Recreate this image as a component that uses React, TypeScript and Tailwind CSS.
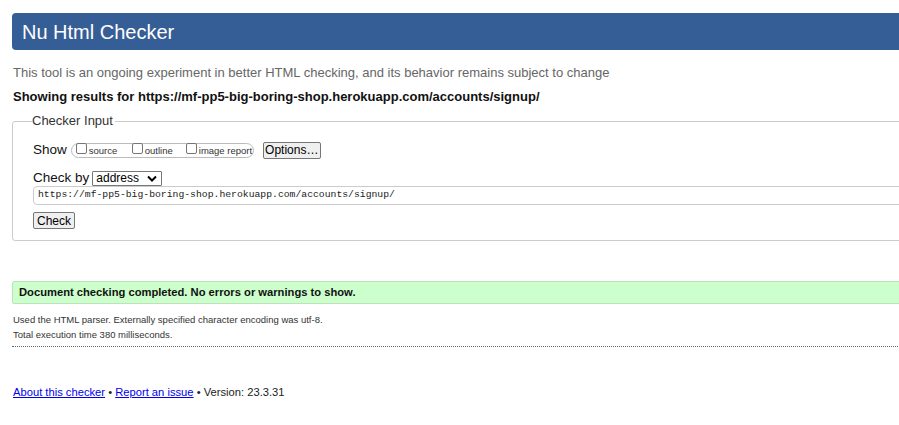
import React from "react";

const sans = { fontFamily: '"Liberation Sans", Arial, sans-serif' };

function Box({ label, w }: { label: string; w: string }) {
  return (
    <span className={`inline-flex items-center whitespace-nowrap ${w}`}>
      <span className="inline-block shrink-0 w-[11px] h-[11px] border border-[#767676] rounded-[2px] bg-white mr-[2px] -mt-[3px]" />
      <span className="text-[9.5px] text-[#333] mt-[2px]">{label}</span>
    </span>
  );
}

export default function App() {
  return (
    <div className="w-[899px] h-[425px] overflow-hidden bg-white" style={sans}>
      <div className="w-[1100px] pl-3 pt-[13px]">
        <div className="h-[37px] bg-[#365e96] rounded-[4px] flex items-center pl-[10px]">
          <h1 className="text-white text-[20px] leading-none">Nu Html Checker</h1>
        </div>
        <p className="mt-[15px] pl-px text-[13px] leading-[16px] text-[#666]">
          This tool is an ongoing experiment in better HTML checking, and its behavior remains subject to change
        </p>
        <p className="mt-[8px] pl-px text-[13px] leading-[16px] font-bold text-[#111]">
          Showing results for https://mf-pp5-big-boring-shop.herokuapp.com/accounts/signup/
        </p>
        <fieldset className="mt-[8px] border border-[#ccc] rounded-[3px] pl-5 pb-[11px]">
          <legend className="text-[13px] leading-[16px] text-[#333] pr-[2px] -ml-px">Checker Input</legend>
          <div className="mt-[12px] flex items-center h-[18px]">
            <span className="text-[13.5px] text-[#111] mr-[4px]">Show</span>
            <span className="inline-flex items-center h-[15px] border border-[#bbb] rounded-full pl-[4px] w-[183px]">
              <Box label="source" w="w-[56px]" />
              <Box label="outline" w="w-[54px]" />
              <Box label="image report" w="w-[64px]" />
            </span>
            <span className="ml-[9px] inline-flex items-center justify-center h-[17px] w-[58px] bg-[#efefef] border border-[#767676] rounded-[2px] text-[12px] text-black">
              Options…
            </span>
          </div>
          <div className="mt-[11px] flex items-center h-[16px]">
            <span className="text-[13.5px] text-[#111] mr-[3px]">Check by</span>
            <span className="inline-flex items-center justify-between w-[70px] h-[15px] border border-[#767676] rounded-[1px] pl-[3px] pr-[4px] text-[12px] text-black">
              address
              <svg width="10" height="7" viewBox="0 0 10 7">
                <path d="M1 1.5 L5 5.5 L9 1.5" stroke="#000" strokeWidth="2" fill="none" />
              </svg>
            </span>
          </div>
          <div className="mt-0 h-[19px] border border-[#ccc] rounded-[4px] flex items-center pl-[4px] text-[9.75px] text-[#222]" style={{ fontFamily: '"Liberation Mono", "DejaVu Sans Mono", monospace' }}>
            https://mf-pp5-big-boring-shop.herokuapp.com/accounts/signup/
          </div>
          <div className="mt-[7px] flex">
            <span className="inline-flex items-center justify-center h-[17px] w-[42px] bg-[#efefef] border border-[#767676] rounded-[2px] text-[12px] text-black">
              Check
            </span>
          </div>
        </fieldset>
        <div className="mt-[40px] h-[23px] bg-[#ccffcc] border border-[#bbe2bb] rounded-[2px] flex items-center pl-[6px]">
          <span className="text-[11.2px] font-bold text-[#111]">Document checking completed. No errors or warnings to show.</span>
        </div>
        <p className="mt-[8px] pl-px text-[9.5px] leading-[15px] text-[#333]">
          Used the HTML parser. Externally specified character encoding was utf-8.
        </p>
        <p className="pl-px text-[9.5px] leading-[15px] text-[#333]">Total execution time 380 milliseconds.</p>
        <div className="mt-[4px] border-t border-dotted border-[#666]" />
        <p className="mt-[38px] pl-px text-[11.2px] leading-[14px] text-[#222]">
          <a className="text-[#0000ee] underline" href="#">About this checker</a>
          {" • "}
          <a className="text-[#0000ee] underline" href="#">Report an issue</a>
          {" • Version: 23.3.31"}
        </p>
      </div>
    </div>
  );
}
